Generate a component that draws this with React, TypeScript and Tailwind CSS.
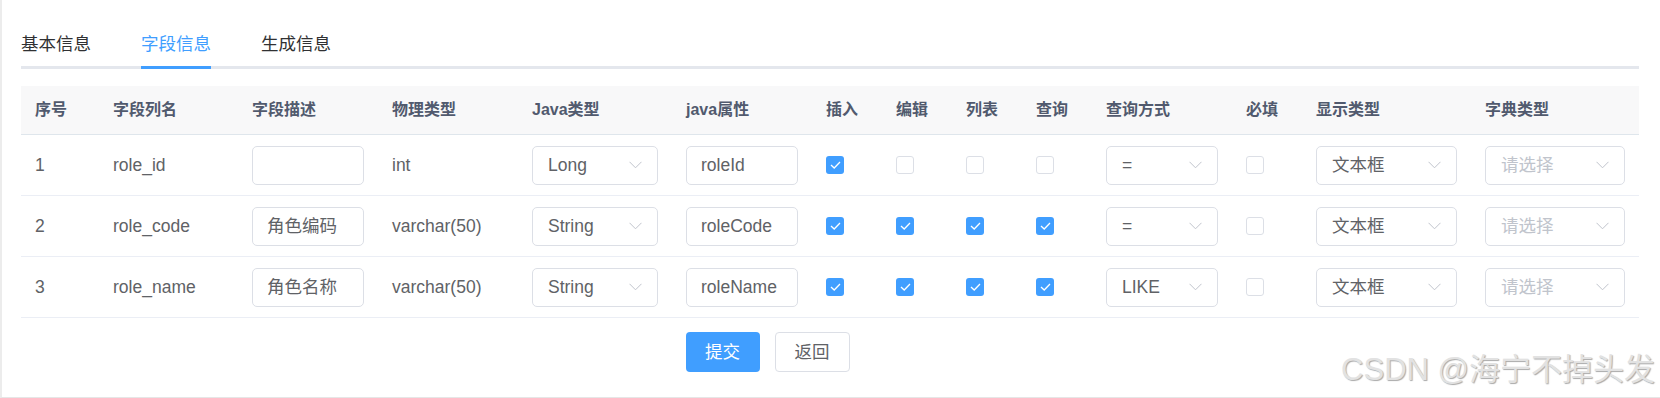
import React from 'react';

interface Column {
  columnName: string;
  columnComment: string;
  columnType: string;
  javaType: string;
  javaField: string;
  isInsert: boolean;
  isEdit: boolean;
  isList: boolean;
  isQuery: boolean;
  queryType: string;
  isRequired: boolean;
  htmlType: string;
}

const columns: Column[] = [
  { columnName: 'role_id', columnComment: '', columnType: 'int', javaType: 'Long', javaField: 'roleId', isInsert: true, isEdit: false, isList: false, isQuery: false, queryType: '=', isRequired: false, htmlType: '文本框' },
  { columnName: 'role_code', columnComment: '角色编码', columnType: 'varchar(50)', javaType: 'String', javaField: 'roleCode', isInsert: true, isEdit: true, isList: true, isQuery: true, queryType: '=', isRequired: false, htmlType: '文本框' },
  { columnName: 'role_name', columnComment: '角色名称', columnType: 'varchar(50)', javaType: 'String', javaField: 'roleName', isInsert: true, isEdit: true, isList: true, isQuery: true, queryType: 'LIKE', isRequired: false, htmlType: '文本框' },
];

const headers = ['序号', '字段列名', '字段描述', '物理类型', 'Java类型', 'java属性', '插入', '编辑', '列表', '查询', '查询方式', '必填', '显示类型', '字典类型'];

// column widths measured off the screenshot
const gridCols = 'grid grid-cols-[78px_139px_140px_140px_154px_140px_70px_70px_70px_70px_140px_70px_169px_168px]';

const Checkbox = ({ checked }: { checked: boolean }) =>
  checked ? (
    <span className="w-[18px] h-[18px] rounded-[3px] bg-[#409eff] flex items-center justify-center">
      <svg width="11" height="8" viewBox="0 0 11 8" fill="none">
        <polyline points="1,4 4.2,7 10,1" stroke="white" strokeWidth="1.3" />
      </svg>
    </span>
  ) : (
    <span className="w-[18px] h-[18px] rounded-[3px] border border-[#dcdfe6] bg-white" />
  );

const Input = ({ value }: { value: string }) => (
  <div className="w-full h-[39px] rounded-[5px] border border-[#dcdfe6] px-[14px] flex items-center text-[#606266]">
    {value}
  </div>
);

const Select = ({ value, placeholder }: { value?: string; placeholder?: string }) => (
  <div className="w-full h-[39px] rounded-[5px] border border-[#dcdfe6] pl-[15px] pr-[15px] flex items-center justify-between">
    <span className={value ? 'text-[#606266]' : 'text-[#c0c4cc]'}>{value || placeholder}</span>
    <svg width="13" height="8" viewBox="0 0 13 8" fill="none">
      <polyline points="0.5,0.8 6.5,6.8 12.5,0.8" stroke="#c0c4cc" strokeWidth="1" />
    </svg>
  </div>
);

const Cell = ({ children }: { children: React.ReactNode }) => (
  <div className="px-[14px] flex items-center">{children}</div>
);

export default function App() {
  const tabs = ['基本信息', '字段信息', '生成信息'];

  return (
    <div className="relative w-full h-[398px] bg-white border-l-2 border-b border-l-[#ececec] border-b-[#e6e6e6] pl-[19px] pr-[21px] font-['Liberation_Sans','Noto_Sans_CJK_SC',sans-serif] overflow-hidden">
      {/* tabs */}
      <div className="mt-[19px] h-[50px] border-b-[3px] border-[#e4e7ed] flex gap-[50px]">
        {tabs.map((t, i) => (
          <div
            key={t}
            className={`h-[50px] pt-[3px] border-b-[3px] flex items-center text-[17.5px] ${
              i === 1 ? 'border-[#409eff] text-[#409eff]' : 'border-transparent text-[#303133]'
            }`}
          >
            {t}
          </div>
        ))}
      </div>

      {/* table */}
      <div className="mt-[17px]">
        <div className={`${gridCols} h-[49px] bg-[#f8f8f9] border-b border-[#dfe6ec] text-[16px] font-bold text-[#515a6e]`}>
          {headers.map((h) => (
            <Cell key={h}>{h}</Cell>
          ))}
        </div>
        {columns.map((c, idx) => (
          <div key={c.columnName} className={`${gridCols} h-[61px] border-b border-[#ebeef5] text-[17.5px] text-[#606266]`}>
            <Cell>{idx + 1}</Cell>
            <Cell>{c.columnName}</Cell>
            <Cell><Input value={c.columnComment} /></Cell>
            <Cell>{c.columnType}</Cell>
            <Cell><Select value={c.javaType} /></Cell>
            <Cell><Input value={c.javaField} /></Cell>
            <Cell><Checkbox checked={c.isInsert} /></Cell>
            <Cell><Checkbox checked={c.isEdit} /></Cell>
            <Cell><Checkbox checked={c.isList} /></Cell>
            <Cell><Checkbox checked={c.isQuery} /></Cell>
            <Cell><Select value={c.queryType} /></Cell>
            <Cell><Checkbox checked={c.isRequired} /></Cell>
            <Cell><Select value={c.htmlType} /></Cell>
            <Cell><Select placeholder="请选择" /></Cell>
          </div>
        ))}
      </div>

      {/* buttons */}
      <div className="mt-[14px] ml-[-125px] flex justify-center gap-[15px] text-[17.5px]">
        <button className="w-[74px] h-[40px] rounded-[4px] bg-[#409eff] text-white">提交</button>
        <button className="w-[75px] h-[40px] rounded-[4px] border border-[#dcdfe6] bg-white text-[#606266]">返回</button>
      </div>

      {/* watermark */}
      <div className="absolute right-[5px] bottom-[12px] text-[31px] leading-[31px] text-[#e2e2e2] [text-shadow:1px_1px_1px_#a9a9a9] select-none">
        CSDN @海宁不掉头发
      </div>
    </div>
  );
}
